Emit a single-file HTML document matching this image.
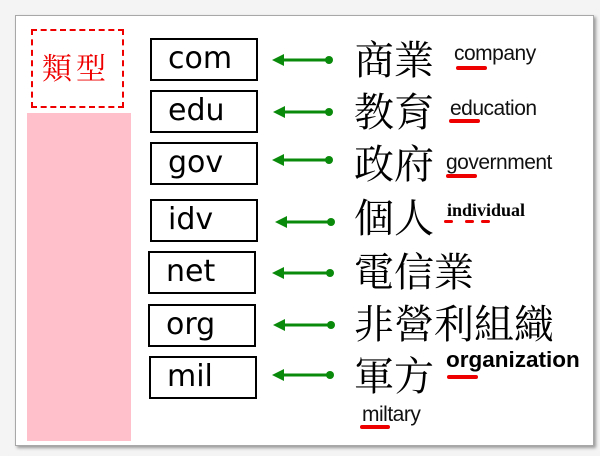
<!DOCTYPE html>
<html><head><meta charset="utf-8"><style>
*{margin:0;padding:0}
body{width:600px;height:456px;background:#f4f4f4;position:relative;overflow:hidden;font-family:"Liberation Sans",sans-serif}
.frame{position:absolute;left:15px;top:15px;width:577px;height:429px;background:#fff;border:1px solid #a8a8a8;box-shadow:2px 2px 3px #999}
.box{position:absolute;width:104px;height:39px;border:2px solid #000;box-sizing:content-box;font-family:"DejaVu Sans",sans-serif;font-size:30px;line-height:38px;text-indent:16px;color:#000}
.zh{position:absolute;left:354px;font-family:"Noto Serif CJK TC","Noto Serif CJK SC",serif;font-size:40px;line-height:44px;color:#000}
.en{position:absolute;font-size:21px;color:#111;letter-spacing:-0.5px}
.u{position:absolute;height:4px;background:#e00;border-radius:2px}
</style></head><body>
<div class="frame"></div>
<div style="position:absolute;left:31px;top:29px;width:89px;height:75px;border:2px dashed #e00"></div>
<div style="position:absolute;left:42px;top:44px;color:#e00;font-family:'Noto Serif CJK TC','Noto Serif CJK SC',serif;font-size:30px;letter-spacing:4px">類型</div>
<div style="position:absolute;left:27px;top:113px;width:104px;height:328px;background:#ffc0cb"></div>

<div class="box" style="left:150px;top:38px">com</div>
<div class="box" style="left:150px;top:90px">edu</div>
<div class="box" style="left:150px;top:142px">gov</div>
<div class="box" style="left:150px;top:199px">idv</div>
<div class="box" style="left:148px;top:251px">net</div>
<div class="box" style="left:148px;top:304px">org</div>
<div class="box" style="left:149px;top:356px">mil</div>

<svg style="position:absolute;left:0;top:0" width="600" height="456">
<g fill="#0a8a0a" stroke="#0a8a0a">
<line x1="280" y1="60" x2="328" y2="60" stroke-width="3"/><polygon points="272,60 284,54 284,66" stroke="none"/><circle cx="329" cy="60" r="4" stroke="none"/>
<line x1="281" y1="112" x2="328" y2="112" stroke-width="3"/><polygon points="273,112 285,106 285,118" stroke="none"/><circle cx="329" cy="112" r="4" stroke="none"/>
<line x1="280" y1="160" x2="328" y2="160" stroke-width="3"/><polygon points="272,160 284,154 284,166" stroke="none"/><circle cx="329" cy="160" r="4" stroke="none"/>
<line x1="283" y1="222" x2="330" y2="222" stroke-width="3"/><polygon points="275,222 287,216 287,228" stroke="none"/><circle cx="331" cy="222" r="4" stroke="none"/>
<line x1="280" y1="273" x2="329" y2="273" stroke-width="3"/><polygon points="272,273 284,267 284,279" stroke="none"/><circle cx="330" cy="273" r="4" stroke="none"/>
<line x1="281" y1="325" x2="330" y2="325" stroke-width="3"/><polygon points="273,325 285,319 285,331" stroke="none"/><circle cx="331" cy="325" r="4" stroke="none"/>
<line x1="280" y1="375" x2="329" y2="375" stroke-width="3"/><polygon points="272,375 284,369 284,381" stroke="none"/><circle cx="330" cy="375" r="4" stroke="none"/>
</g></svg>

<div class="zh" style="top:36px">商業</div>
<div class="zh" style="top:88px">教育</div>
<div class="zh" style="top:140px">政府</div>
<div class="zh" style="top:194px">個人</div>
<div class="zh" style="top:248px">電信業</div>
<div class="zh" style="top:300px">非營利組織</div>
<div class="zh" style="top:352px">軍方</div>

<div class="en" style="left:454px;top:42px">company</div><div class="u" style="left:456px;top:66px;width:31px"></div>
<div class="en" style="left:450px;top:97px">education</div><div class="u" style="left:449px;top:119px;width:31px"></div>
<div class="en" style="left:446px;top:151px">government</div><div class="u" style="left:446px;top:174px;width:31px"></div>
<div style="position:absolute;left:447px;top:200px;font-family:'Liberation Serif',serif;font-weight:bold;font-size:18px">individual</div>
<div class="u" style="left:444px;top:220px;width:9px;height:3px"></div><div class="u" style="left:465px;top:220px;width:9px;height:3px"></div><div class="u" style="left:481px;top:220px;width:9px;height:3px"></div>
<div style="position:absolute;left:446px;top:347px;font-weight:bold;font-size:22.5px">organization</div><div class="u" style="left:447px;top:375px;width:31px"></div>
<div class="en" style="left:362px;top:403px">miltary</div><div class="u" style="left:360px;top:425px;width:30px"></div>
</body></html>
